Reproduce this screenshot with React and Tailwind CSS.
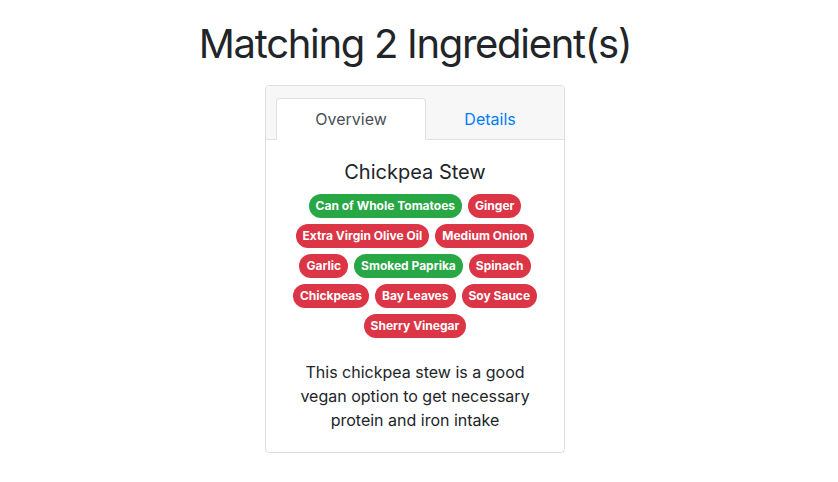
import React from "react";

const badges = [
  ["Can of Whole Tomatoes", true],
  ["Ginger", false],
  ["Extra Virgin Olive Oil", false],
  ["Medium Onion", false],
  ["Garlic", false],
  ["Smoked Paprika", true],
  ["Spinach", false],
  ["Chickpeas", false],
  ["Bay Leaves", false],
  ["Soy Sauce", false],
  ["Sherry Vinegar", false],
];

export default function App() {
  return (
    <div
      className="min-h-[482px] bg-white text-[#212529] flex flex-col items-center pr-[8px]"
      style={{ fontFamily: "Inter, 'Noto Sans', Roboto, sans-serif" }}
    >
      <h1 className="mt-[20px] text-[40px] leading-[48px] font-normal text-[#212529] tracking-[-1.3px]">
        Matching 2 Ingredient(s)
      </h1>
      <div className="mt-[17px] w-[300px] border border-[rgba(0,0,0,0.125)] rounded-[4px] overflow-hidden">
        <div className="bg-[#f7f7f7] border-b border-[#dee2e6] pt-[12px] px-[10px]">
          <div className="flex -mb-px">
            <div className="flex-[1_1_auto] h-[42px] px-4 flex items-center justify-center bg-white border border-[#dee2e6] border-b-white rounded-t-[4px] text-[16px] text-[#495057]">
              Overview
            </div>
            <div className="flex-[1_1_auto] h-[42px] px-4 flex items-center justify-center text-[16px] text-[#007bff]">
              Details
            </div>
          </div>
        </div>
        <div className="px-[20px] pt-[20px] pb-[20px] text-center">
          <h5 className="text-[20px] leading-[24px] font-normal mb-[10px]">Chickpea Stew</h5>
          <div className="flex flex-wrap justify-center gap-[6px]">
            {badges.map(([name, ok]) => (
              <span
                key={name}
                className={
                  "h-[24px] px-[7px] flex items-center rounded-full text-white text-[12px] font-bold leading-none " +
                  (ok ? "bg-[#28a745]" : "bg-[#dc3545]")
                }
              >
                {name}
              </span>
            ))}
          </div>
          <p className="mt-[22px] text-[16px] leading-[24px] px-[14px]">
            This chickpea stew is a good vegan option to get necessary protein and iron intake
          </p>
        </div>
      </div>
    </div>
  );
}
